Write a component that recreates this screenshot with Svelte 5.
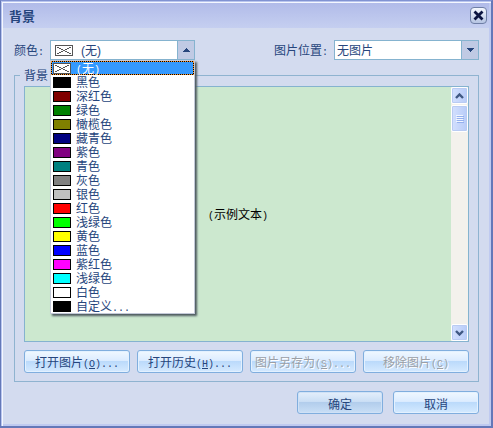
<script>
  const colors = [
    { name: '无', bracket: true, value: null },
    { name: '黑色', value: '#000000' },
    { name: '深红色', value: '#800000' },
    { name: '绿色', value: '#008000' },
    { name: '橄榄色', value: '#808000' },
    { name: '藏青色', value: '#000080' },
    { name: '紫色', value: '#800080' },
    { name: '青色', value: '#008080' },
    { name: '灰色', value: '#808080' },
    { name: '银色', value: '#c0c0c0' },
    { name: '红色', value: '#ff0000' },
    { name: '浅绿色', value: '#00ff00' },
    { name: '黄色', value: '#ffff00' },
    { name: '蓝色', value: '#0000ff' },
    { name: '紫红色', value: '#ff00ff' },
    { name: '浅绿色', value: '#00ffff' },
    { name: '白色', value: '#ffffff' },
    { name: '自定义', dots: '...', value: '#000000' }
  ];
  const actions = [
    { text: '打开图片', key: 'O', dots: '...', disabled: false },
    { text: '打开历史', key: 'H', dots: '...', disabled: false },
    { text: '图片另存为', key: 'S', dots: '...', disabled: true },
    { text: '移除图片', key: 'C', dots: '', disabled: true }
  ];

  let selected = $state(0);
  let open = $state(true);

  function toggle(event) {
    event.preventDefault();
    open = !open;
  }

  function choose(index) {
    selected = index;
    open = false;
  }
</script>

{#snippet swatch(color)}
  {#if color}
    <span class="swatch" style="background: {color}"></span>
  {:else}
    <svg class="swatch none" viewBox="0 0 18 11" shape-rendering="crispEdges" aria-hidden="true">
      <rect x="0.5" y="0.5" width="17" height="10" fill="#fff" stroke="#555" />
      <path d="M2 2 16 9M16 2 2 9" stroke="#555" fill="none" />
    </svg>
  {/if}
{/snippet}

<main class="dialog">
  <header>
    <h1>背景</h1>
    <button class="close" aria-label="关闭">
      <svg viewBox="0 0 15 15" aria-hidden="true">
        <path d="M3.500 3.500 11.500 11.500M11.500 3.500 3.500 11.500" stroke="#0b1440" stroke-width="2.800" />
      </svg>
    </button>
  </header>

  <div class="content">
    <div class="fields">
      <div class="field">
        <label for="color">颜色<span class="half">:</span></label>
        <div class="combo">
          <select id="color" class="with-swatch" bind:value={selected} onmousedown={toggle}>
            {#each colors as color, i}
              <option value={i}>{color.bracket ? `(${color.name})` : color.name}{color.dots ?? ''}</option>
            {/each}
          </select>
          <span class="preview">{@render swatch(colors[selected].value)}</span>
          <span class="arrow"><svg viewBox="0 0 7 4" shape-rendering="crispEdges"><path d="M0 4h7v-1h-1v-1h-1v-1h-1v-1h-1v1h-1v1h-1v1h-1z" /></svg></span>
          {#if open}
            <ul role="listbox" aria-label="颜色">
              {#each colors as color, i}
                <li role="option" aria-selected={i === selected}>
                  <button class="item" class:current={i === selected} onclick={() => choose(i)}>
                    {@render swatch(color.value)}
                    <span class="name">{#if color.bracket}<span class="half">(</span>{color.name}<span class="half">)</span>{:else}{color.name}{/if}{#if color.dots}<span class="half">{color.dots}</span>{/if}</span>
                  </button>
                </li>
              {/each}
            </ul>
          {/if}
        </div>
      </div>
      <div class="field">
        <label for="position">图片位置<span class="half">:</span></label>
        <div class="combo">
          <select id="position">
            <option>无图片</option>
          </select>
          <span class="arrow"><svg viewBox="0 0 7 4" shape-rendering="crispEdges"><path d="M0 0h7v1h-1v1h-1v1h-1v1h-1v-1h-1v-1h-1v-1h-1z" /></svg></span>
        </div>
      </div>
    </div>

    <section class="group" aria-labelledby="group-title">
      <h2 id="group-title"><span>背景</span></h2>
      <div class="preview-box">
        <p><span class="half">(</span>示例文本<span class="half">)</span></p>
        <div class="scrollbar">
          <button class="scroll" aria-label="向上滚动">
            <svg viewBox="0 0 9 6"><path d="M1 5 4.500 1.500 8 5" /></svg>
          </button>
          <div class="thumb"><i></i><i></i><i></i><i></i></div>
          <button class="scroll end" aria-label="向下滚动">
            <svg viewBox="0 0 9 6"><path d="M1 1 4.500 4.500 8 1" /></svg>
          </button>
        </div>
      </div>
      <div class="actions">
        {#each actions as action}
          <button class="push" disabled={action.disabled}>
            {action.text}<span class="half">(<u>{action.key}</u>){action.dots}</span>
          </button>
        {/each}
      </div>
    </section>

    <footer>
      <button class="push default">确定</button>
      <button class="push">取消</button>
    </footer>
  </div>
</main>

<style>
  :global(body) {
    margin: 0;
    background: #d3dbef;
  }

  .dialog,
  .dialog * {
    box-sizing: border-box;
  }

  .dialog {
    display: flex;
    flex-direction: column;
    min-height: 100vh;
    border: 1px solid #6478b8;
    border-top-color: #8193d2;
    border-right-width: 2px;
    border-bottom-width: 2px;
    box-shadow: inset 1px 1px #b9c5ee, inset 2px 2px #f4f7ff, inset -2px -2px #bfcaf0;
    background: #d3dbef;
    color: #26457c;
    font: 12px/14px "Liberation Sans", "Noto Sans CJK SC", sans-serif;
  }

  button,
  select {
    margin: 0;
    font: inherit;
    color: inherit;
  }

  h1,
  h2,
  p,
  ul {
    margin: 0;
    padding: 0;
    font: inherit;
  }

  label {
    padding-top: 2px;
  }

  .half {
    font-family: "Liberation Mono", monospace;
    font-size: 10px;
    line-height: 12px;
  }

  header {
    display: flex;
    align-items: center;
    justify-content: space-between;
    height: 25px;
    margin: 2px 2px 0;
    padding: 0 2px 0 6px;
    background: linear-gradient(#b1bbe9, #c5cff0);
  }

  h1 {
    padding-top: 2px;
    font-size: 13px;
    font-weight: 700;
  }

  .close {
    width: 17px;
    height: 17px;
    padding: 0;
    border: 1px solid #6f7fa6;
    border-radius: 4px;
    background: linear-gradient(#f4f7fe, #b5c4e2);
  }

  .close svg {
    display: block;
    width: 15px;
    height: 15px;
  }

  .content {
    flex: 1;
    display: flex;
    flex-direction: column;
    padding: 12px 12px 12px 13px;
  }

  .fields {
    display: flex;
    justify-content: space-between;
  }

  .field {
    display: flex;
    align-items: center;
    gap: 6px;
  }

  .combo {
    position: relative;
    width: 145px;
    height: 20px;
  }

  select {
    display: block;
    width: 100%;
    height: 100%;
    padding: 2px 20px 0 2px;
    border: 1px solid #85b3cf;
    border-radius: 0;
    background: #fff;
    appearance: none;
    outline: none;
  }

  select.with-swatch {
    padding-left: 30px;
  }

  .preview {
    position: absolute;
    top: 5px;
    left: 5px;
    pointer-events: none;
  }

  .arrow {
    position: absolute;
    top: 0;
    right: 0;
    display: grid;
    place-items: center;
    width: 18px;
    height: 20px;
    border: 1px solid #85b3cf;
    background: #c0cae4;
    pointer-events: none;
  }

  .arrow svg {
    width: 7px;
    height: 4px;
    fill: #26457c;
  }

  ul {
    position: absolute;
    top: 20px;
    left: 0;
    z-index: 2;
    width: 145px;
    border: 1px solid #c3c9d8;
    background: #fff;
    box-shadow: 2px 2px 2px #4e5a60;
    list-style: none;
  }

  .item {
    display: flex;
    align-items: center;
    gap: 5px;
    width: 100%;
    height: 14px;
    padding: 0 2px;
    border: 0;
    background: none;
    text-align: left;
  }

  .item.current {
    padding: 0 1px;
    border: 1px dotted #ff9526;
    background: linear-gradient(#3399ff, #3399ff) padding-box, #000;
    color: #fff;
  }

  .name {
    padding-top: 2px;
  }

  .swatch {
    display: block;
    flex: none;
    width: 18px;
    height: 11px;
    border: 1px solid #000;
  }

  .swatch.none {
    border: 0;
  }

  .group {
    flex: 1;
    display: flex;
    flex-direction: column;
    gap: 8px;
    margin-top: 15px;
    padding: 0 9px 8px;
    border: 1px solid #8fb3d0;
  }

  h2 {
    height: 2px;
  }

  h2 span {
    position: relative;
    top: -7px;
    display: inline-block;
    margin-left: -4px;
    padding: 0 4px;
    background: #d3dbef;
  }

  .preview-box {
    flex: 1;
    display: flex;
    border: 1px solid #85b3cf;
    background: #cce8cf;
    color: #000;
  }

  .preview-box p {
    flex: 1;
    align-self: center;
    padding-top: 2px;
    text-align: center;
  }

  .scrollbar {
    display: flex;
    flex-direction: column;
    gap: 1px;
    width: 17px;
    background: #f3f1ec;
  }

  .scroll,
  .thumb {
    border: 1px solid #fff;
    border-radius: 2px;
    background: linear-gradient(90deg, #d3e0fe, #b8ccf8);
    box-shadow: inset 0 0 0 1px #b9cbf3;
  }

  .scroll {
    display: grid;
    place-items: center;
    height: 17px;
    padding: 0;
  }

  .scroll.end {
    margin-top: auto;
  }

  .scroll svg {
    width: 9px;
    height: 6px;
    fill: none;
    stroke: #3f5883;
    stroke-width: 2.4;
  }

  .thumb {
    display: flex;
    flex-direction: column;
    align-items: center;
    justify-content: center;
    gap: 1px;
    height: 27px;
  }

  .thumb i {
    width: 7px;
    height: 1px;
    background: #f1f6ff;
    box-shadow: 1px 1px #94b0ee;
  }

  .actions {
    display: grid;
    grid-template-columns: repeat(4, 1fr);
    gap: 7px;
  }

  .push {
    height: 23px;
    padding: 4px 0 0;
    border: 1px solid #80aede;
    border-radius: 3px;
    background: linear-gradient(#f0f8ff, #dcecff 45%, #bbdafb 50%, #d5eaff);
    box-shadow: inset 0 0 0 1px #e3f1ff;
    white-space: nowrap;
  }

  .push.default {
    background: linear-gradient(#e4effb, #cbdff5 45%, #b2cdec 50%, #c9dff6);
    box-shadow: inset 0 0 0 1px #cfe1f6;
  }

  .push:disabled {
    color: #9b9fa6;
    text-shadow: 1px 1px #fff;
  }

  footer {
    display: flex;
    justify-content: flex-end;
    gap: 10px;
    margin-top: 9px;
  }

  footer .push {
    width: 86px;
  }
</style>
